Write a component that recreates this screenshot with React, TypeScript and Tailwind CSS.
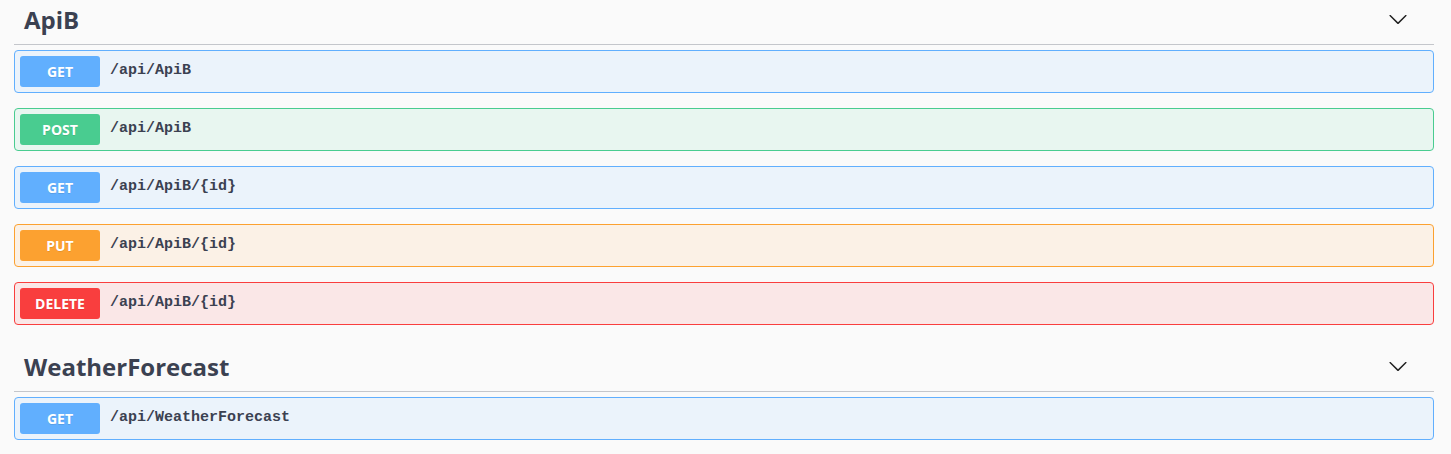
type Method = "GET" | "POST" | "PUT" | "DELETE";

interface Operation {
  method: Method;
  path: string;
}

interface Tag {
  name: string;
  operations: Operation[];
}

const methodStyles: Record<Method, { block: string; badge: string }> = {
  GET: { block: "border-[#61affe] bg-[#ebf3fb]", badge: "bg-[#61affe]" },
  POST: { block: "border-[#49cc90] bg-[#e8f6f0]", badge: "bg-[#49cc90]" },
  PUT: { block: "border-[#fca130] bg-[#fbf1e6]", badge: "bg-[#fca130]" },
  DELETE: { block: "border-[#f93e3e] bg-[#fae7e7]", badge: "bg-[#f93e3e]" }
};

const tags: Tag[] = [
  {
    name: "ApiB",
    operations: [
      { method: "GET", path: "/api/ApiB" },
      { method: "POST", path: "/api/ApiB" },
      { method: "GET", path: "/api/ApiB/{id}" },
      { method: "PUT", path: "/api/ApiB/{id}" },
      { method: "DELETE", path: "/api/ApiB/{id}" }
    ]
  },
  {
    name: "WeatherForecast",
    operations: [{ method: "GET", path: "/api/WeatherForecast" }]
  }
];

function Chevron() {
  return (
    <svg width="20" height="20" viewBox="0 0 20 20" className="fill-[#1f1f1f]">
      <path d="M17.418 6.109c.272-.268.709-.268.979 0s.271.701 0 .969l-7.908 7.83c-.27.268-.707.268-.979 0l-7.908-7.83c-.27-.268-.27-.701 0-.969.271-.268.709-.268.979 0L10 13.25l7.418-7.141z" />
    </svg>
  );
}

function OperationRow({ op }: { op: Operation }) {
  const style = methodStyles[op.method];
  return (
    <div className={`mb-[15px] flex h-[43px] items-center rounded-[4px] border px-[5px] ${style.block}`}>
      <span
        className={`flex h-[31px] w-[80px] items-center justify-center rounded-[3px] text-[14px] font-bold text-white [text-shadow:0_1px_0_rgba(0,0,0,0.1)] ${style.badge}`}
        style={{ fontFamily: '"Open Sans", "Noto Sans", sans-serif' }}
      >
        {op.method}
      </span>
      <span className="px-[10px] text-[15px] font-semibold text-[#3b4151]" style={{ fontFamily: '"Liberation Mono", monospace' }}>
        {op.path}
      </span>
    </div>
  );
}

export default function App() {
  return (
    <div className="h-[454px] overflow-hidden bg-[#fafafa]" style={{ fontFamily: '"Open Sans", "Noto Sans", sans-serif' }}>
      <div className="-mt-[7px] w-[1420px] ml-[14px]">
        {tags.map((tag) => (
          <section key={tag.name}>
            <div className="mb-[5px] flex h-[52px] items-center justify-between border-b border-[#c4c6cb] pl-[10px] pr-[26px]">
              <h3 className="pt-[2px] text-[24px] font-bold leading-none text-[#3b4151]">{tag.name}</h3>
              <Chevron />
            </div>
            {tag.operations.map((op, i) => (
              <OperationRow key={i} op={op} />
            ))}
          </section>
        ))}
      </div>
    </div>
  );
}
